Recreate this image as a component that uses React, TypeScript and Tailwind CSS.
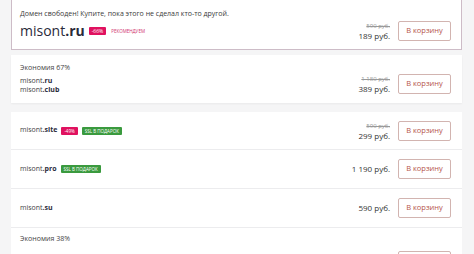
const FONT = { fontFamily: '"Open Sans", "Noto Sans", sans-serif' };

type Row = {
  name: string;
  zone: string;
  badge?: string;
  ssl?: boolean;
  oldPrice?: string;
  price: string;
};

const rows: Row[] = [
  { name: 'misont', zone: '.site', badge: '-49%', ssl: true, oldPrice: '590 руб.', price: '299 руб.' },
  { name: 'misont', zone: '.pro', ssl: true, price: '1 190 руб.' },
  { name: 'misont', zone: '.su', price: '590 руб.' },
];

function CartButton() {
  return (
    <button className="flex h-[20px] w-[53px] items-center justify-center rounded-[2px] border border-[#d2b4b0] bg-white text-[7.5px] text-[#b5534a]">
      В корзину
    </button>
  );
}

function Price({ oldPrice, price }: { oldPrice?: string; price: string }) {
  return (
    <div className="flex flex-col items-end leading-[10px]">
      {oldPrice && <span className="text-[6px] text-[#9a9a9a] line-through">{oldPrice}</span>}
      <span className="text-[8px] text-[#333]">{price}</span>
    </div>
  );
}

export default function App() {
  return (
    <div className="h-[254px] w-[474px] overflow-hidden bg-[#f5f5f6] pl-[11px] pr-[12px]" style={FONT}>
      {/* free domain */}
      <div className="flex h-[50px] flex-col border-x border-b border-[#cdbcc7] bg-white pl-[8px] pr-[10px] pt-[8px]">
        <p className="text-[7px] leading-[12px] text-[#3a3a3a]">Домен свободен! Купите, пока этого не сделал кто-то другой.</p>
        <div className="mt-[1px] flex items-center justify-between">
          <div className="flex items-center">
            <span className="text-[14px] leading-[20px] text-[#2a2a3a]">
              misont<b className="font-bold">.ru</b>
            </span>
            <span className="ml-[4px] rounded-[1px] bg-[#e0115f] px-[3px] text-[5px] leading-[8px] text-white">-66%</span>
            <span className="ml-[5px] text-[4.5px] uppercase text-[#d0306e]">рекомендуем</span>
          </div>
          <div className="flex items-center gap-[8px]">
            <Price oldPrice="590 руб." price="189 руб." />
            <CartButton />
          </div>
        </div>
      </div>

      {/* bundle */}
      <div className="mt-[5px] flex h-[48px] items-end justify-between bg-white pb-[9px] pl-[9px] pr-[11px] pt-[6px] shadow-[0_1px_2px_rgba(0,0,0,0.05)]">
        <div className="flex flex-col text-[7px] text-[#444]">
          <span className="leading-[10px]">Экономия 67%</span>
          <span className="mt-[4px] leading-[8px]">misont<b className="font-bold text-[#2a2a3a]">.ru</b></span>
          <span className="leading-[9px]">misont<b className="font-bold text-[#2a2a3a]">.club</b></span>
        </div>
        <div className="flex items-center gap-[8px]">
          <Price oldPrice="1 180 руб." price="389 руб." />
          <CartButton />
        </div>
      </div>

      {/* single domains */}
      <div className="mt-[9px] flex flex-col gap-[1px] bg-[#ececee]">
        {rows.map((r) => (
          <div key={r.zone} className="flex h-[38px] items-center justify-between bg-white pl-[9px] pr-[11px] first:h-[37px]">
            <div className="flex items-center gap-[4px]">
              <span className="text-[7px] text-[#444]">
                {r.name}<b className="font-bold text-[#2a2a3a]">{r.zone}</b>
              </span>
              {r.badge && <span className="rounded-[1px] bg-[#e0115f] px-[3px] text-[4.5px] leading-[8px] text-white">{r.badge}</span>}
              {r.ssl && <span className="rounded-[1px] bg-[#3a9a3e] px-[3px] text-[4.5px] uppercase leading-[8px] text-white">ssl в подарок</span>}
            </div>
            <div className="flex items-center gap-[8px]">
              <Price oldPrice={r.oldPrice} price={r.price} />
              <CartButton />
            </div>
          </div>
        ))}
        <div className="flex h-[40px] items-start justify-between bg-white pl-[9px] pr-[11px] pt-[6px]">
          <span className="text-[7px] leading-[10px] text-[#444]">Экономия 38%</span>
          <div className="mt-[17px]">
            <CartButton />
          </div>
        </div>
      </div>
    </div>
  );
}
